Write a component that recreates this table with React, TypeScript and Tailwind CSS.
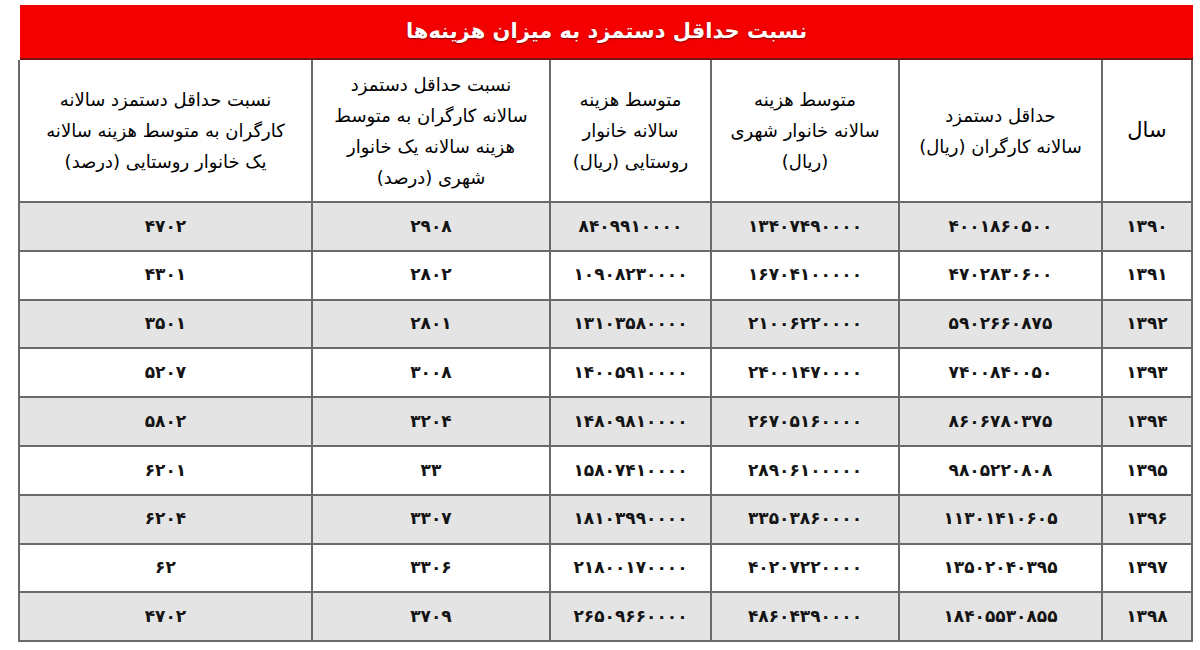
const headers: string[][] = [
  ['سال'],
  ['حداقل دستمزد', 'سالانه کارگران (ریال)'],
  ['متوسط هزینه', 'سالانه خانوار شهری', '(ریال)'],
  ['متوسط هزینه', 'سالانه خانوار', 'روستایی (ریال)'],
  ['نسبت حداقل دستمزد', 'سالانه کارگران به متوسط', 'هزینه سالانه یک خانوار', 'شهری (درصد)'],
  ['نسبت حداقل دستمزد سالانه', 'کارگران به متوسط هزینه سالانه', 'یک خانوار روستایی (درصد)'],
];

// column widths, right to left
const widths = ['w-[90px]', 'w-[203px]', 'w-[188px]', 'w-[161px]', 'w-[238px]', 'w-[293px]'];

const rows: string[][] = [
  ['۱۳۹۰', '۴۰۰۱۸۶۰۵۰۰', '۱۳۴۰۷۴۹۰۰۰۰', '۸۴۰۹۹۱۰۰۰۰', '۲۹۰۸', '۴۷۰۲'],
  ['۱۳۹۱', '۴۷۰۲۸۳۰۶۰۰', '۱۶۷۰۴۱۰۰۰۰۰', '۱۰۹۰۸۲۳۰۰۰۰', '۲۸۰۲', '۴۳۰۱'],
  ['۱۳۹۲', '۵۹۰۲۶۶۰۸۷۵', '۲۱۰۰۶۲۲۰۰۰۰', '۱۳۱۰۳۵۸۰۰۰۰', '۲۸۰۱', '۳۵۰۱'],
  ['۱۳۹۳', '۷۴۰۰۸۴۰۰۵۰', '۲۴۰۰۱۴۷۰۰۰۰', '۱۴۰۰۵۹۱۰۰۰۰', '۳۰۰۸', '۵۲۰۷'],
  ['۱۳۹۴', '۸۶۰۶۷۸۰۳۷۵', '۲۶۷۰۵۱۶۰۰۰۰', '۱۴۸۰۹۸۱۰۰۰۰', '۳۲۰۴', '۵۸۰۲'],
  ['۱۳۹۵', '۹۸۰۵۲۲۰۸۰۸', '۲۸۹۰۶۱۰۰۰۰۰', '۱۵۸۰۷۴۱۰۰۰۰', '۳۳', '۶۲۰۱'],
  ['۱۳۹۶', '۱۱۳۰۱۴۱۰۶۰۵', '۳۳۵۰۳۸۶۰۰۰۰', '۱۸۱۰۳۹۹۰۰۰۰', '۳۳۰۷', '۶۲۰۴'],
  ['۱۳۹۷', '۱۳۵۰۲۰۴۰۳۹۵', '۴۰۲۰۷۲۲۰۰۰۰', '۲۱۸۰۰۱۷۰۰۰۰', '۳۳۰۶', '۶۲'],
  ['۱۳۹۸', '۱۸۴۰۵۵۳۰۸۵۵', '۴۸۶۰۴۳۹۰۰۰۰', '۲۶۵۰۹۶۶۰۰۰۰', '۳۷۰۹', '۴۷۰۲'],
];

export default function App() {
  return (
    <div
      dir="rtl"
      className="w-[1200px] h-[650px] bg-white pt-[5px] pr-[7px] overflow-hidden"
      style={{ fontFamily: '"DejaVu Sans", sans-serif' }}
    >
      <div className="w-[1173px]">
        {/* Title bar */}
        <div className="h-[55px] bg-[#f40000] border-b-2 border-[#7a1010] flex items-center justify-center">
          <h1 className="text-white text-[21px] font-bold [text-shadow:0_1px_2px_rgba(0,0,0,0.45)]">
            نسبت حداقل دستمزد به میزان هزینه‌ها
          </h1>
        </div>

        <table className="w-[1173px] table-fixed border-collapse">
          <colgroup>
            {widths.map((w, i) => (
              <col key={i} className={w} />
            ))}
          </colgroup>
          <thead>
            <tr>
              {headers.map((lines, i) => (
                <th
                  key={i}
                  className={
                    'h-[142px] border-2 border-[#6a6a6a] border-t-0 bg-white text-black font-normal leading-[31px] text-center align-middle ' +
                    (i === 0 ? 'text-[21px]' : 'text-[18px]')
                  }
                >
                  {lines.map((l, j) => (
                    <div key={j} className="whitespace-nowrap">
                      {l}
                    </div>
                  ))}
                </th>
              ))}
            </tr>
          </thead>
          <tbody>
            {rows.map((row, r) => (
              <tr key={r} className={r % 2 === 0 ? 'bg-[#e4e4e4]' : 'bg-white'}>
                {row.map((cell, c) => (
                  <td
                    key={c}
                    className="h-[48.8px] border-2 border-[#6a6a6a] text-center align-middle text-[17px] font-bold text-[#141414]"
                  >
                    {cell}
                  </td>
                ))}
              </tr>
            ))}
          </tbody>
        </table>
      </div>
    </div>
  );
}
